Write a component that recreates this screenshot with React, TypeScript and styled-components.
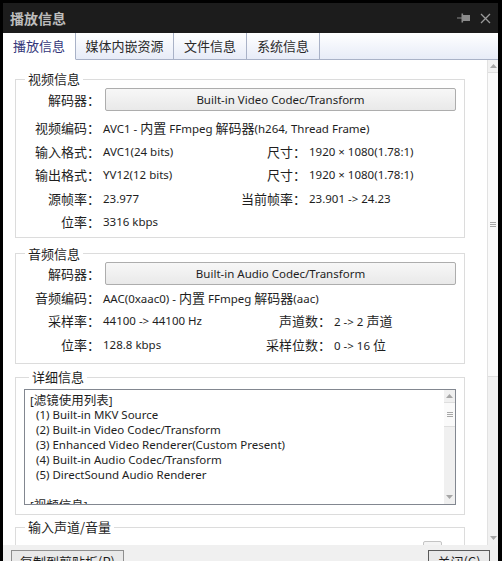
import React from 'react';
import styled, { createGlobalStyle } from 'styled-components';

const GlobalStyle = createGlobalStyle`
  html, body { margin: 0; padding: 0; background: #000; }
  #root { width: 502px; height: 561px; overflow: hidden; }
  * { box-sizing: border-box; }
`;

const CJK = `"Noto Sans CJK SC", "Noto Sans", sans-serif`;
const LATIN = `"Noto Sans", "Noto Sans CJK SC", sans-serif`;

const Window = styled.div`
  width: 502px;
  height: 561px;
  background: #000;
  padding: 3px 4px 0 3px;
  display: flex;
  flex-direction: column;
  font-family: ${CJK};
  font-size: 13px;
  color: #1e1e1e;
`;

const TitleBar = styled.div`
  height: 30px;
  flex: none;
  background: #1c1c1c;
  display: flex;
  align-items: center;
  padding: 0 7px 0 7px;
`;

const Title = styled.div`
  flex: 1;
  font-size: 14px;
  font-weight: bold;
  color: #bcbcbc;
`;

const TitleIcons = styled.div`
  display: flex;
  align-items: center;
  gap: 9px;
`;

const TabStrip = styled.div`
  height: 27px;
  flex: none;
  display: flex;
  background: linear-gradient(#ffffff, #e6ebf7);
`;

const Tab = styled.div<{ $w: number; $active?: boolean }>`
  width: ${p => p.$w}px;
  display: flex;
  align-items: center;
  justify-content: center;
  font-size: 13px;
  color: ${p => (p.$active ? '#34377a' : '#2a2a2a')};
  background: ${p => (p.$active ? '#ffffff' : 'transparent')};
  border-right: 1px solid #a9b2c7;
  border-bottom: 1px solid ${p => (p.$active ? 'transparent' : '#a9b2c7')};
  padding-bottom: 1px;
`;

const TabFill = styled.div`
  flex: 1;
  border-bottom: 1px solid #a9b2c7;
`;

const Body = styled.div`
  flex: 1;
  min-height: 0;
  display: flex;
`;

const Content = styled.div`
  flex: 1;
  background: #fff;
  overflow: hidden;
  padding: 11px 22px 0 12px;
`;

const ScrollTrack = styled.div<{ $w: number }>`
  width: ${p => p.$w}px;
  flex: none;
  background: #f1f1f1;
  border-left: 1px solid #e2e2e2;
  display: flex;
  flex-direction: column;
  align-items: stretch;
`;

const ArrowBox = styled.div<{ $h: number }>`
  height: ${p => p.$h}px;
  flex: none;
  display: flex;
  align-items: center;
  justify-content: center;
`;

const Thumb = styled.div<{ $h: number }>`
  height: ${p => p.$h}px;
  flex: none;
  background: #fafafa;
  border-top: 1px solid #dedede;
  border-bottom: 1px solid #dedede;
  display: flex;
  align-items: center;
  justify-content: center;
`;

const TrackRest = styled.div`
  flex: 1;
`;

const Group = styled.fieldset<{ $mt: number; $pt: number; $pb: number; $pl?: number; $pr?: number }>`
  margin: ${p => p.$mt}px 0 0 0;
  border: 1px solid #dcdcdc;
  padding: ${p => p.$pt}px ${p => p.$pr ?? 8}px ${p => p.$pb}px ${p => p.$pl ?? 4}px;
  min-width: 0;
`;

const Legend = styled.legend`
  margin-left: 5px;
  padding: 0 3px;
  font-size: 13px;
  line-height: 16px;
  color: #1e1e1e;
`;

const ButtonRow = styled.div<{ $mb: number }>`
  display: grid;
  grid-template-columns: 80px 1fr;
  column-gap: 3px;
  align-items: center;
  margin-bottom: ${p => p.$mb}px;
`;

const Row = styled.div<{ $w1?: number }>`
  display: grid;
  grid-template-columns: ${p => (p.$w1 ? `80px ${p.$w1}px 70px 1fr` : '80px 1fr')};
  column-gap: 3px;
  align-items: center;
  height: 23.5px;
  white-space: nowrap;
`;

const Label = styled.div`
  text-align: right;
  white-space: nowrap;
`;

const Value = styled.div`
  white-space: nowrap;
  font-family: ${LATIN};
  font-size: 11.5px;
`;

const Cjk = styled.span<{ $size?: number }>`
  font-family: ${CJK};
  font-size: ${p => p.$size ?? 13}px;
`;

const CodecButton = styled.div`
  margin-left: 2px;
  height: 23px;
  border: 1px solid #adadad;
  border-radius: 2px;
  background: linear-gradient(#f7f7f7, #e9e9e9);
  display: flex;
  align-items: center;
  justify-content: center;
  color: #1e1e1e;
  font-family: ${LATIN};
  font-size: 11.5px;
`;

const TextBox = styled.div`
  height: 116px;
  border: 1px solid #828790;
  display: flex;
  overflow: hidden;
`;

const TextLines = styled.div`
  flex: 1;
  padding: 2px 0 0 5px;
  line-height: 15px;
  white-space: nowrap;
  overflow: hidden;
  font-family: ${LATIN};
  font-size: 11.5px;
`;

const Line = styled.div<{ $indent?: boolean }>`
  height: 15px;
  padding-left: ${p => (p.$indent ? 6 : 0)}px;
`;

const InnerTrack = styled.div`
  width: 11px;
  flex: none;
  background: #f0f0f0;
  display: flex;
  flex-direction: column;
`;

const VolumeRow = styled.div`
  display: flex;
  justify-content: flex-end;
  padding-right: 14px;
`;

const SmallBox = styled.div`
  width: 19px;
  height: 20px;
  border: 1px solid #c4c4c4;
  border-radius: 2px;
  background: #f4f4f4;
`;

const BottomBar = styled.div`
  height: 16px;
  flex: none;
  background: #f0f0f0;
  overflow: hidden;
  display: flex;
  justify-content: space-between;
  align-items: flex-start;
  padding: 5px 8px 0 8px;
`;

const DialogButton = styled.div<{ $w: number; $default?: boolean }>`
  width: ${p => p.$w}px;
  height: 23px;
  flex: none;
  border: 1px solid ${p => (p.$default ? '#5a5a5a' : '#8f8f8f')};
  background: #e9e9e9;
  display: flex;
  align-items: center;
  justify-content: center;
  font-size: 13px;
  color: #1e1e1e;
`;

const PinIcon = () => (
  <svg width="14" height="10" viewBox="0 0 14 10">
    <rect x="0" y="4.5" width="5" height="1" fill="#8a8a8a" />
    <rect x="4.5" y="0.5" width="1.6" height="9" fill="#8a8a8a" />
    <rect x="6" y="2" width="7" height="6" fill="#8a8a8a" />
  </svg>
);

const CloseIcon = () => (
  <svg width="11" height="11" viewBox="0 0 11 11">
    <path d="M1 1 L10 10 M10 1 L1 10" stroke="#9a9a9a" strokeWidth="1.3" fill="none" />
  </svg>
);

const Up = () => (
  <svg width="7" height="4" viewBox="0 0 7 4">
    <polygon points="0,4 3.5,0 7,4" fill="#a6a6a6" />
  </svg>
);

const Down = () => (
  <svg width="7" height="4" viewBox="0 0 7 4">
    <polygon points="0,0 3.5,4 7,0" fill="#a6a6a6" />
  </svg>
);

const Grip = () => (
  <svg width="6" height="5" viewBox="0 0 6 5">
    <rect x="0" y="0" width="6" height="1" fill="#a8a8a8" />
    <rect x="0" y="2" width="6" height="1" fill="#a8a8a8" />
    <rect x="0" y="4" width="6" height="1" fill="#a8a8a8" />
  </svg>
);

const tabs = [
  { t: '播放信息', w: 73, active: true },
  { t: '媒体内嵌资源', w: 98 },
  { t: '文件信息', w: 73 },
  { t: '系统信息', w: 73 },
];

const filterLines = [
  '(1) Built-in MKV Source',
  '(2) Built-in Video Codec/Transform',
  '(3) Enhanced Video Renderer(Custom Present)',
  '(4) Built-in Audio Codec/Transform',
  '(5) DirectSound Audio Renderer',
];

export default function App() {
  return (
    <>
      <GlobalStyle />
      <Window>
        <TitleBar>
          <Title>播放信息</Title>
          <TitleIcons>
            <PinIcon />
            <CloseIcon />
          </TitleIcons>
        </TitleBar>
        <TabStrip>
          {tabs.map(tb => (
            <Tab key={tb.t} $w={tb.w} $active={tb.active}>
              {tb.t}
            </Tab>
          ))}
          <TabFill />
        </TabStrip>
        <Body>
          <Content>
            <Group $mt={0} $pt={1} $pb={3}>
              <Legend>视频信息</Legend>
              <ButtonRow $mb={5}>
                <Label>解码器：</Label>
                <CodecButton>Built-in Video Codec/Transform</CodecButton>
              </ButtonRow>
              <Row>
                <Label>视频编码：</Label>
                <Value>
                  AVC1 - <Cjk>内置</Cjk> FFmpeg <Cjk>解码器</Cjk>(h264, Thread Frame)
                </Value>
              </Row>
              <Row $w1={130}>
                <Label>输入格式：</Label>
                <Value>AVC1(24 bits)</Value>
                <Label>尺寸：</Label>
                <Value>1920 × 1080(1.78:1)</Value>
              </Row>
              <Row $w1={130}>
                <Label>输出格式：</Label>
                <Value>YV12(12 bits)</Value>
                <Label>尺寸：</Label>
                <Value>1920 × 1080(1.78:1)</Value>
              </Row>
              <Row $w1={130}>
                <Label>源帧率：</Label>
                <Value>23.977</Value>
                <Label>当前帧率：</Label>
                <Value>23.901 -&gt; 24.23</Value>
              </Row>
              <Row>
                <Label>位率：</Label>
                <Value>3316 kbps</Value>
              </Row>
            </Group>

            <Group $mt={8} $pt={0} $pb={7}>
              <Legend>音频信息</Legend>
              <ButtonRow $mb={1}>
                <Label>解码器：</Label>
                <CodecButton>Built-in Audio Codec/Transform</CodecButton>
              </ButtonRow>
              <Row>
                <Label>音频编码：</Label>
                <Value>
                  AAC(0xaac0) - <Cjk>内置</Cjk> FFmpeg <Cjk>解码器</Cjk>(aac)
                </Value>
              </Row>
              <Row $w1={155}>
                <Label>采样率：</Label>
                <Value>44100 -&gt; 44100 Hz</Value>
                <Label>声道数：</Label>
                <Value>
                  2 -&gt; 2 <Cjk>声道</Cjk>
                </Value>
              </Row>
              <Row $w1={155}>
                <Label>位率：</Label>
                <Value>128.8 kbps</Value>
                <Label>采样位数：</Label>
                <Value>
                  0 -&gt; 16 <Cjk>位</Cjk>
                </Value>
              </Row>
            </Group>

            <Group $mt={5} $pt={4} $pb={9} $pl={8} $pr={8}>
              <Legend>详细信息</Legend>
              <TextBox>
                <TextLines>
                  <Line>
                    [<Cjk $size={12.5}>滤镜使用列表</Cjk>]
                  </Line>
                  {filterLines.map(l => (
                    <Line key={l} $indent>
                      {l}
                    </Line>
                  ))}
                  <Line />
                  <Line>
                    [<Cjk $size={12.5}>视频信息</Cjk>]
                  </Line>
                </TextLines>
                <InnerTrack>
                  <ArrowBox $h={12}>
                    <Up />
                  </ArrowBox>
                  <Thumb $h={25}>
                    <Grip />
                  </Thumb>
                  <TrackRest />
                  <ArrowBox $h={14}>
                    <Down />
                  </ArrowBox>
                </InnerTrack>
              </TextBox>
            </Group>

            <Group $mt={4} $pt={6} $pb={10}>
              <Legend>输入声道/音量</Legend>
              <VolumeRow>
                <SmallBox />
              </VolumeRow>
            </Group>
          </Content>
          <ScrollTrack $w={11}>
            <ArrowBox $h={12}>
              <Up />
            </ArrowBox>
            <Thumb $h={305}>
              <Grip />
            </Thumb>
            <TrackRest />
            <ArrowBox $h={14}>
              <Down />
            </ArrowBox>
          </ScrollTrack>
        </Body>
        <BottomBar>
          <DialogButton $w={113}>复制到剪贴板(P)</DialogButton>
          <DialogButton $w={62} $default>
            关闭(C)
          </DialogButton>
        </BottomBar>
      </Window>
    </>
  );
}
